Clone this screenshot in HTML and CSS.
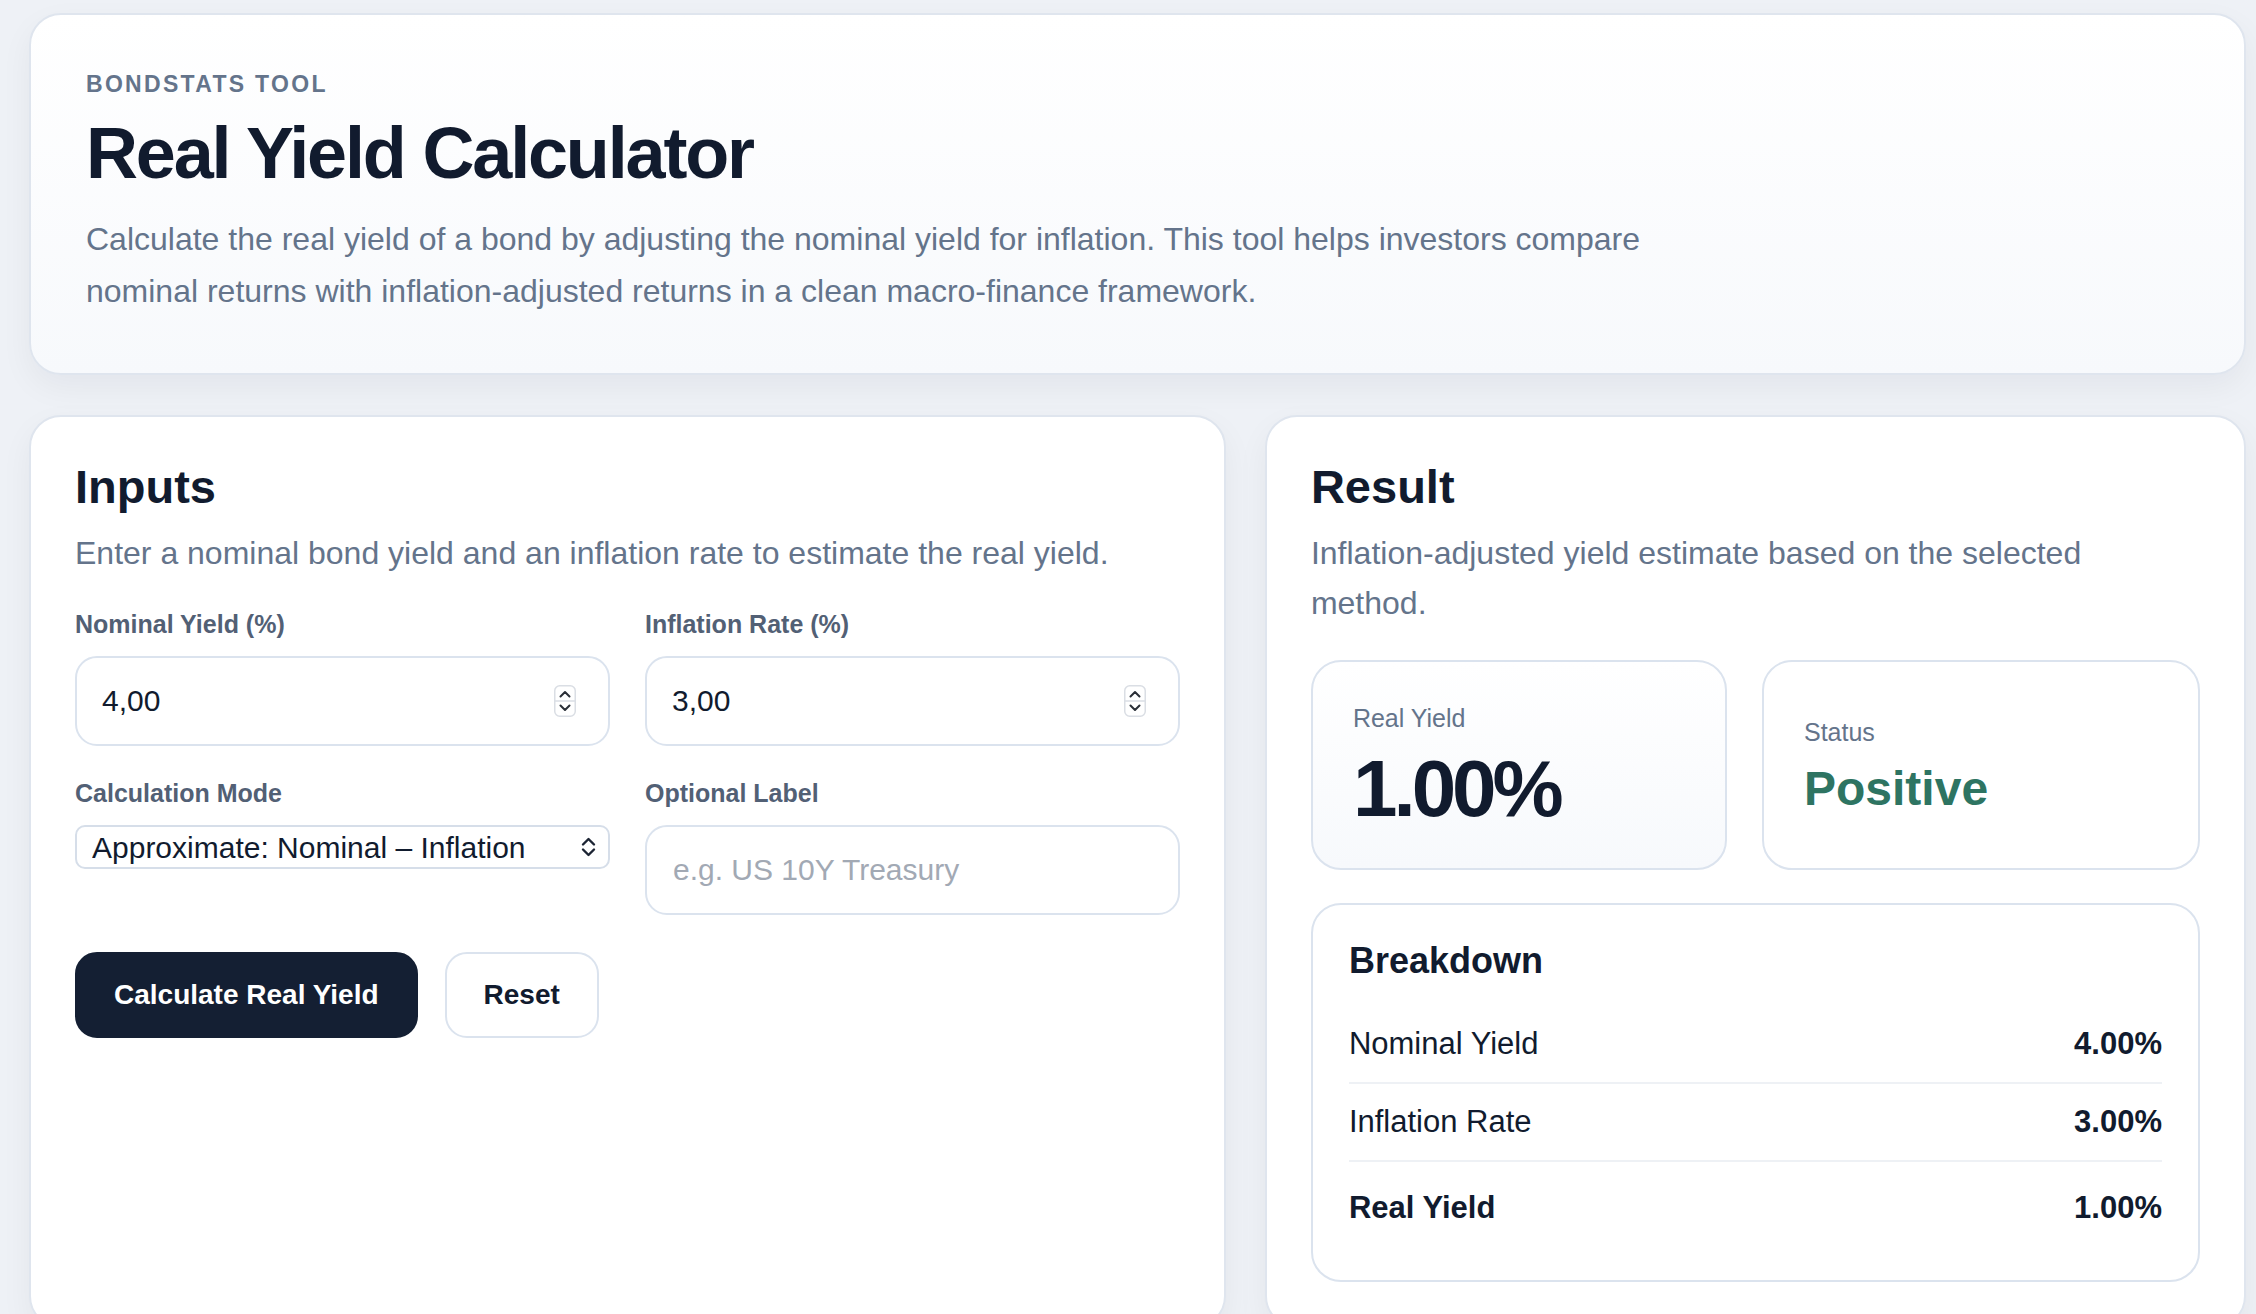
FILE: index.html
```html
<!DOCTYPE html>
<html lang="en">
<head>
    <meta charset="UTF-8">
    <meta name="viewport" content="width=device-width, initial-scale=1.0">
    <title>Real Yield Calculator | BondStats</title>
    <link rel="stylesheet" href="styles.css">
</head>
<body>
    <div class="page">
        <header class="hero">
            <p class="eyebrow">BondStats Tool</p>
            <h1>Real Yield Calculator</h1>
            <p class="hero-text">Calculate the real yield of a bond by adjusting the nominal yield for inflation. This tool helps investors compare nominal returns with inflation-adjusted returns in a clean macro-finance framework.</p>
        </header>

        <main class="layout">
            <section class="panel">
                <h2>Inputs</h2>
                <p class="panel-sub">Enter a nominal bond yield and an inflation rate to estimate the real yield.</p>

                <form id="yield_form" class="fields">
                    <div class="field">
                        <label for="nominal_yield">Nominal Yield (%)</label>
                        <div class="input-box">
                            <input type="text" inputmode="decimal" id="nominal_yield" name="nominal_yield" value="4,00">
                            <svg class="spinner" width="22" height="32" viewBox="0 0 22 32">
                                <rect x="0.75" y="0.75" width="20.5" height="30.5" rx="5" fill="#fff" stroke="#dadee4" stroke-width="1.5"/>
                                <line x1="1" y1="16" x2="21" y2="16" stroke="#dadee4" stroke-width="1.5"/>
                                <path d="M6.5 11.5 L11 7 L15.5 11.5" fill="none" stroke="#2a2f37" stroke-width="2" stroke-linecap="round" stroke-linejoin="round"/>
                                <path d="M6.5 20.5 L11 25 L15.5 20.5" fill="none" stroke="#2a2f37" stroke-width="2" stroke-linecap="round" stroke-linejoin="round"/>
                            </svg>
                        </div>
                    </div>
                    <div class="field">
                        <label for="inflation_rate">Inflation Rate (%)</label>
                        <div class="input-box">
                            <input type="text" inputmode="decimal" id="inflation_rate" name="inflation_rate" value="3,00">
                            <svg class="spinner" width="22" height="32" viewBox="0 0 22 32">
                                <rect x="0.75" y="0.75" width="20.5" height="30.5" rx="5" fill="#fff" stroke="#dadee4" stroke-width="1.5"/>
                                <line x1="1" y1="16" x2="21" y2="16" stroke="#dadee4" stroke-width="1.5"/>
                                <path d="M6.5 11.5 L11 7 L15.5 11.5" fill="none" stroke="#2a2f37" stroke-width="2" stroke-linecap="round" stroke-linejoin="round"/>
                                <path d="M6.5 20.5 L11 25 L15.5 20.5" fill="none" stroke="#2a2f37" stroke-width="2" stroke-linecap="round" stroke-linejoin="round"/>
                            </svg>
                        </div>
                    </div>
                    <div class="field">
                        <label for="calc_mode">Calculation Mode</label>
                        <div class="select-wrap">
                            <select id="calc_mode" name="calc_mode">
                                <option value="approx">Approximate: Nominal – Inflation</option>
                                <option value="fisher">Exact: Fisher Equation</option>
                            </select>
                            <svg class="select-arrows" width="17" height="24" viewBox="0 0 17 24">
                                <path d="M3 9.5 L8.5 4 L14 9.5" fill="none" stroke="#1c2433" stroke-width="2.4" stroke-linecap="round" stroke-linejoin="round"/>
                                <path d="M3 14.5 L8.5 20 L14 14.5" fill="none" stroke="#1c2433" stroke-width="2.4" stroke-linecap="round" stroke-linejoin="round"/>
                            </svg>
                        </div>
                    </div>
                    <div class="field">
                        <label for="bond_label">Optional Label</label>
                        <input type="text" class="text-input" id="bond_label" name="bond_label" placeholder="e.g. US 10Y Treasury">
                    </div>
                </form>

                <div class="actions">
                    <button type="submit" form="yield_form" class="btn btn-primary">Calculate Real Yield</button>
                    <button type="reset" form="yield_form" class="btn btn-secondary">Reset</button>
                </div>
            </section>

            <section class="panel result-panel">
                <h2>Result</h2>
                <p class="panel-sub">Inflation-adjusted yield estimate based on the selected method.</p>

                <div class="stats">
                    <div class="stat stat-main">
                        <span class="stat-label">Real Yield</span>
                        <span class="stat-value">1.00%</span>
                    </div>
                    <div class="stat">
                        <span class="stat-label">Status</span>
                        <span class="stat-status">Positive</span>
                    </div>
                </div>

                <div class="breakdown">
                    <h3>Breakdown</h3>
                    <div class="rows">
                        <div class="row"><span>Nominal Yield</span><strong>4.00%</strong></div>
                        <div class="row"><span>Inflation Rate</span><strong>3.00%</strong></div>
                        <div class="row row-total"><span>Real Yield</span><strong>1.00%</strong></div>
                    </div>
                </div>
            </section>
        </main>
    </div>
</body>
</html>
```

FILE: styles.css
```css
body {
    margin: 0;
    background-color: #eef1f6;
    font-family: "Liberation Sans", Arial, Helvetica, sans-serif;
    color: #111b2e;
}

.page {
    padding: 13px 10px 0 29px;
}

/* header card */

.hero {
    background: linear-gradient(180deg, #ffffff 0%, #f7f9fc 100%);
    border: 2px solid #dfe5ee;
    border-radius: 32px;
    padding: 55px 55px 56px;
    box-shadow: 0 12px 32px rgba(15, 23, 42, 0.05);
}

.eyebrow {
    margin: 0;
    font-size: 23px;
    line-height: 28px;
    font-weight: 700;
    letter-spacing: 0.1em;
    text-transform: uppercase;
    color: #64748b;
}

.hero h1 {
    margin: 16px 0 0;
    font-size: 72px;
    line-height: 79px;
    letter-spacing: -0.03em;
    color: #111b2e;
}

.hero-text {
    margin: 20px 0 0;
    max-width: 1600px;
    font-size: 32px;
    line-height: 52px;
    color: #64748b;
}

/* two panels */

.layout {
    display: grid;
    grid-template-columns: 1.22fr 1fr;
    gap: 39px;
    margin-top: 40px;
}

.panel {
    background-color: #fff;
    border: 2px solid #dfe5ee;
    border-radius: 32px;
    padding: 42px 44px 44px;
    box-shadow: 0 12px 32px rgba(15, 23, 42, 0.05);
}

.panel h2 {
    margin: 0;
    font-size: 47px;
    line-height: 56px;
}

.panel-sub {
    margin: 13px 0 0;
    font-size: 32px;
    line-height: 50px;
    color: #64748b;
}

.result-panel .panel-sub {
    max-width: 820px;
}

/* form */

.fields {
    display: grid;
    grid-template-columns: 1fr 1fr;
    gap: 31px 35px;
    margin-top: 30px;
}

.field label {
    display: block;
    margin-bottom: 16px;
    font-size: 25px;
    line-height: 32px;
    font-weight: 700;
    color: #526075;
}

.input-box {
    display: flex;
    align-items: center;
    height: 90px;
    box-sizing: border-box;
    padding: 0 32px 0 25px;
    border: 2px solid #dbe3ee;
    border-radius: 22px;
    background-color: #fff;
}

.input-box input {
    flex: 1;
    min-width: 0;
    padding: 0;
    border: none;
    outline: none;
    background: transparent;
    font-family: inherit;
    font-size: 30px;
    color: #111b2e;
}

.spinner {
    flex: none;
}

.select-wrap {
    position: relative;
}

.select-wrap select {
    width: 100%;
    height: 44px;
    padding: 0 48px 0 15px;
    border: 2px solid #d6dee9;
    border-radius: 10px;
    background-color: #fff;
    font-family: inherit;
    font-size: 30px;
    color: #111b2e;
    appearance: none;
    -webkit-appearance: none;
}

.select-arrows {
    position: absolute;
    right: 13px;
    top: 10px;
    pointer-events: none;
}

.text-input {
    width: 100%;
    height: 90px;
    box-sizing: border-box;
    padding: 0 26px;
    border: 2px solid #dbe3ee;
    border-radius: 22px;
    outline: none;
    font-family: inherit;
    font-size: 30px;
    color: #111b2e;
}

.text-input::placeholder {
    color: #a2a9b4;
}

.actions {
    display: flex;
    gap: 27px;
    margin-top: 37px;
}

.btn {
    height: 86px;
    padding: 0 37px;
    border: 2px solid;
    border-radius: 22px;
    font-family: inherit;
    font-size: 28px;
    font-weight: 700;
    cursor: pointer;
}

.btn-primary {
    background-color: #141f33;
    border-color: #141f33;
    color: #fff;
}

.btn-secondary {
    background-color: #fff;
    border-color: #dbe3ee;
    color: #111b2e;
}

/* result */

.stats {
    display: grid;
    grid-template-columns: 0.95fr 1fr;
    gap: 35px;
    margin-top: 32px;
}

.stat {
    display: flex;
    flex-direction: column;
    justify-content: center;
    gap: 15px;
    height: 210px;
    box-sizing: border-box;
    padding: 0 40px;
    border: 2px solid #dbe3ee;
    border-radius: 30px;
    background-color: #fff;
}

.stat-main {
    background: linear-gradient(180deg, #ffffff 0%, #f7f9fc 100%);
}

.stat-label {
    font-size: 25px;
    line-height: 32px;
    color: #64748b;
}

.stat-value {
    font-size: 80px;
    line-height: 80px;
    font-weight: 700;
    letter-spacing: -0.05em;
}

.stat-status {
    font-size: 48px;
    line-height: 52px;
    font-weight: 700;
    color: #2e7462;
}

.breakdown {
    margin-top: 33px;
    padding: 34px 36px;
    border: 2px solid #dbe3ee;
    border-radius: 30px;
}

.breakdown h3 {
    margin: 0;
    font-size: 36px;
    line-height: 43px;
}

.rows {
    margin-top: 24px;
}

.row {
    display: flex;
    justify-content: space-between;
    padding: 18px 0;
    border-bottom: 2px solid #eef1f5;
    font-size: 31px;
    line-height: 40px;
}

.row-total {
    padding-top: 26px;
    border-bottom: none;
    font-weight: 700;
}
```
